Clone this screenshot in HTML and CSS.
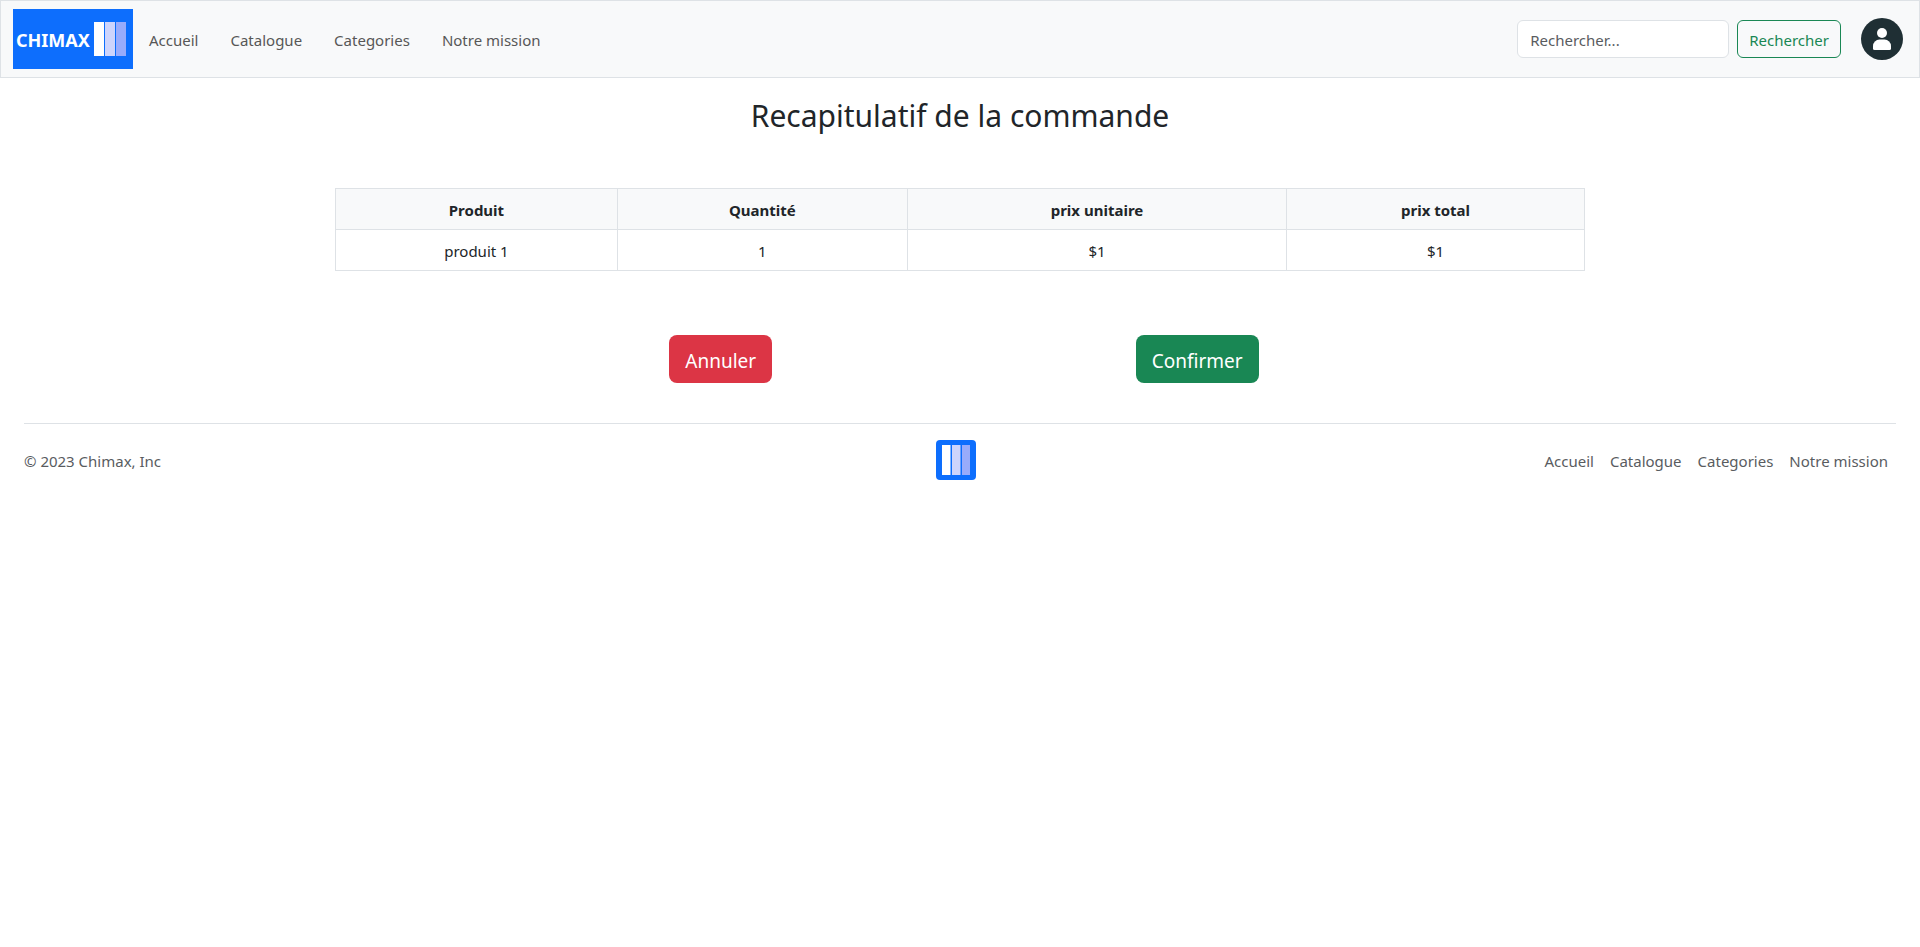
FILE: index.html
```html
<!DOCTYPE html>
<html lang="fr">
<head>
  <meta charset="utf-8">
  <meta name="viewport" content="width=device-width, initial-scale=1">
  <title>Chimax - Recapitulatif de la commande</title>
  <link rel="stylesheet" href="styles.css">
</head>
<body>
  <header class="navbar">
    <a class="brand" href="#" aria-label="Chimax">
      <svg viewBox="0 0 120 60" width="120" height="60">
        <rect width="120" height="60" fill="#0d6efd"/>
        <text class="brand-text" x="3" y="38">CHIMAX</text>
        <rect x="81" y="13" width="10" height="34" fill="#fff"/>
        <rect x="92" y="13" width="10" height="34" fill="#cdd4fc"/>
        <rect x="103" y="13" width="10" height="34" fill="#98abfb"/>
      </svg>
    </a>
    <nav class="nav">
      <a href="#">Accueil</a>
      <a href="#">Catalogue</a>
      <a href="#">Categories</a>
      <a href="#">Notre mission</a>
    </nav>
    <form class="search">
      <input class="search-input" type="search" placeholder="Rechercher..." aria-label="Rechercher">
      <button class="search-button" type="submit">Rechercher</button>
    </form>
    <a class="avatar" href="#" aria-label="Mon compte">
      <svg viewBox="0 0 42 42" width="42" height="42">
        <circle cx="21" cy="21" r="21" fill="#1f2f34"/>
        <circle cx="21" cy="15" r="5" fill="#fff"/>
        <path d="M12 30.500V28a6.500 6.500 0 0 1 6.500-6.500h5A6.500 6.500 0 0 1 30 28v2.500a1.500 1.500 0 0 1-1.500 1.500h-15a1.500 1.500 0 0 1-1.500-1.500z" fill="#fff"/>
      </svg>
    </a>
  </header>

  <main>
    <h1 class="title">Recapitulatif de la commande</h1>
    <table class="order">
      <thead>
        <tr>
          <th scope="col">Produit</th>
          <th scope="col">Quantité</th>
          <th scope="col">prix unitaire</th>
          <th scope="col">prix total</th>
        </tr>
      </thead>
      <tbody>
        <tr>
          <td>produit 1</td>
          <td>1</td>
          <td>$1</td>
          <td>$1</td>
        </tr>
      </tbody>
    </table>
    <div class="actions">
      <button class="action cancel" type="button">Annuler</button>
      <button class="action confirm" type="button">Confirmer</button>
    </div>
  </main>

  <footer class="footer">
    <p class="copyright">© 2023 Chimax, Inc</p>
    <a class="footer-logo" href="#" aria-label="Chimax">
      <svg viewBox="0 0 40 40" width="40" height="40">
        <rect width="40" height="40" rx="4" fill="#0d6efd"/>
        <rect x="6" y="5" width="8.500" height="30" fill="#fff"/>
        <rect x="16" y="5" width="8.500" height="30" fill="#cdd4fc"/>
        <rect x="26" y="5" width="8" height="30" fill="#98abfb"/>
      </svg>
    </a>
    <nav class="footer-nav">
      <a href="#">Accueil</a>
      <a href="#">Catalogue</a>
      <a href="#">Categories</a>
      <a href="#">Notre mission</a>
    </nav>
  </footer>
</body>
</html>
```
FILE: styles.css
```css
* {
  box-sizing: border-box;
}

body {
  margin: 0;
  background: #fff;
  color: #212529;
  font: 15px/24px "Noto Sans", "Open Sans", sans-serif;
}

a {
  text-decoration: none;
}

svg {
  display: block;
}

.navbar {
  display: flex;
  align-items: center;
  padding: 8px 16px 8px 12px;
  background: #f8f9fa;
  border: 1px solid #dee2e6;
}

.brand-text {
  fill: #fff;
  font: 700 18px "Noto Sans", sans-serif;
}

.nav {
  display: flex;
  flex: 1;
  gap: 32px;
  padding: 2px 0 0 16px;
}

.nav a {
  color: #575757;
}

.search {
  display: flex;
  gap: 8px;
}

.search-input,
.search-button {
  height: 38px;
  padding: 8px 12px 6px;
  border: 1px solid #dee2e6;
  border-radius: 6px;
  font: inherit;
  line-height: 22px;
}

.search-input {
  width: 212px;
  background: #fff;
  color: #212529;
  appearance: none;
}

.search-input::placeholder {
  color: #595c5f;
  opacity: 1;
}

.search-button {
  padding: 8px 11px 6px;
  background: transparent;
  border-color: #198754;
  color: #198754;
}

.avatar {
  margin-left: 20px;
}

.title {
  margin: 18px 0 52px;
  font-size: 30px;
  font-weight: 400;
  line-height: 40px;
  text-align: center;
}

.order {
  width: calc(65% + 2px);
  margin: 0 auto;
  border-collapse: collapse;
  text-align: center;
}

.order th,
.order td {
  padding: 9px 8px 7px;
  border: 1px solid #dee2e6;
}

.order th {
  background: #f8f9fa;
  font-weight: 700;
}

.actions {
  display: flex;
  justify-content: space-evenly;
  width: 69%;
  margin: 64px auto 40px;
  padding-left: 8px;
}

.action {
  padding: 11px 16px 7px;
  border: 0;
  border-radius: 8px;
  color: #fff;
  font: inherit;
  font-size: 19px;
  line-height: 30px;
}

.cancel {
  background: #dc3545;
}

.confirm {
  background: #198754;
}

.footer {
  display: grid;
  grid-template-columns: 1fr 1fr 1fr;
  align-items: center;
  margin: 0 24px;
  padding: 16px 0;
  border-top: 1px solid #dee2e6;
}

.copyright {
  margin: 0;
  padding-top: 2px;
  color: #595c5f;
}

.footer-logo {
  justify-self: center;
  margin-right: 8px;
}

.footer-nav {
  display: flex;
  justify-content: flex-end;
  gap: 16px;
  padding: 2px 8px 0;
}

.footer-nav a {
  color: #595c5f;
}
```
